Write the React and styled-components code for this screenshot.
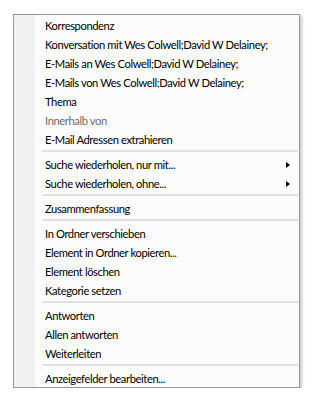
import React from "react";
import styled, { createGlobalStyle } from "styled-components";

const Global = createGlobalStyle`
  html, body { margin: 0; padding: 0; background: #ffffff; }
  body { padding: 14px 0 0 13px; font-family: Lato, "Liberation Sans", sans-serif; }
`;

const Menu = styled.div`
  position: relative;
  width: 287px;
  box-sizing: border-box;
  border: 1px solid #979797;
  background: #fcfcfc;
  box-shadow: 2px 2px 3px rgba(0, 0, 0, 0.22);
  display: flex;
  flex-direction: column;
  background-image: linear-gradient(to right, #f1f1f1 0, #f1f1f1 21px, #fcfcfc 21px);
`;

const Item = styled.div`
  height: 19px;
  display: flex;
  align-items: center;
  justify-content: space-between;
  padding: 2px 9px 0 31px;
  box-sizing: border-box;
  font-size: 11.2px;
  letter-spacing: -0.4px;
  color: ${(p) => (p.$disabled ? "#6d6d6d" : "#000000")};
  white-space: nowrap;
`;

const Label = styled.span`
  line-height: 17px;
`;

const Arrow = styled.span`
  width: 0;
  height: 0;
  border-top: 3.5px solid transparent;
  border-bottom: 3.5px solid transparent;
  border-left: 4px solid #000;
`;

const Separator = styled.div`
  height: 6px;
  display: flex;
  align-items: center;
  padding: 0 1px 0 28px;
  &::after {
    content: "";
    flex: 1;
    height: 2px;
    background: #e2e2e2;
  }
`;

const data = [
  ["Korrespondenz"],
  ["Konversation mit Wes Colwell;David W Delainey;"],
  ["E-Mails an Wes Colwell;David W Delainey;"],
  ["E-Mails von Wes Colwell;David W Delainey;"],
  ["Thema"],
  ["Innerhalb von", "disabled"],
  ["E-Mail Adressen extrahieren"],
  "sep",
  ["Suche wiederholen, nur mit...", "sub"],
  ["Suche wiederholen, ohne...", "sub"],
  "sep",
  ["Zusammenfassung"],
  "sep",
  ["In Ordner verschieben"],
  ["Element in Ordner kopieren..."],
  ["Element löschen"],
  ["Kategorie setzen"],
  "sep",
  ["Antworten"],
  ["Allen antworten"],
  ["Weiterleiten"],
  "sep",
  ["Anzeigefelder bearbeiten..."],
];

export default function App() {
  return (
    <>
      <Global />
      <Menu>
        {data.map((d, i) =>
          d === "sep" ? (
            <Separator key={i} />
          ) : (
            <Item key={i} $disabled={d[1] === "disabled"}>
              <Label>{d[0]}</Label>
              {d[1] === "sub" && <Arrow />}
            </Item>
          )
        )}
      </Menu>
    </>
  );
}
